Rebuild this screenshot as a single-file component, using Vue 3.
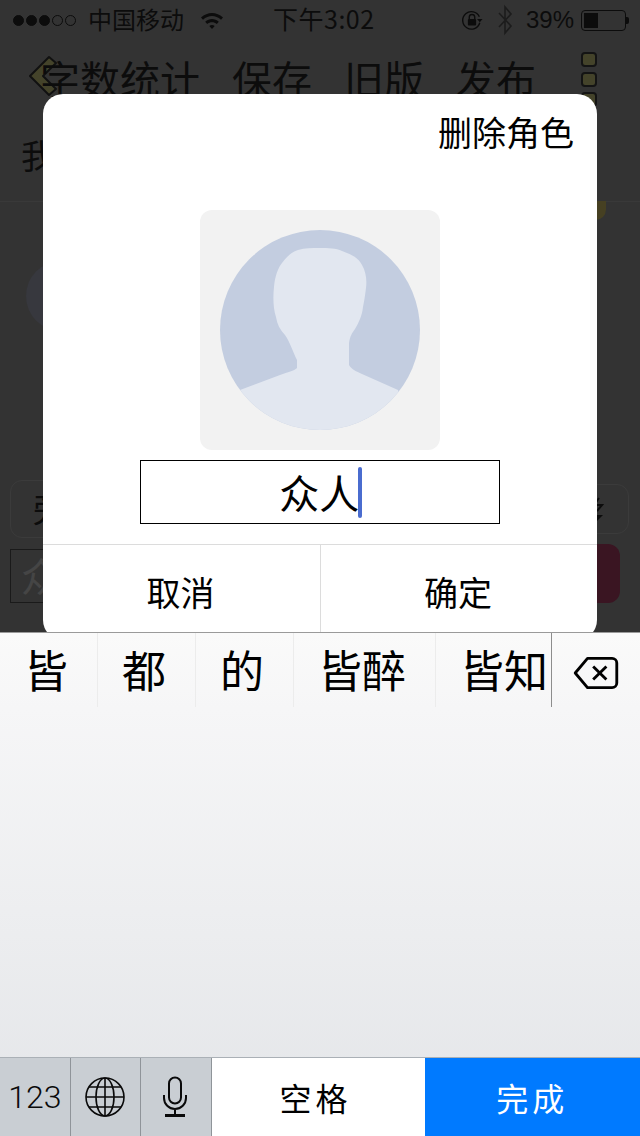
<template>
  <div class="screen">
    <div class="upper">
      <div class="status">
        <div class="signal">
          <i v-for="n in 3" :key="'on' + n" class="dot on"></i>
          <i v-for="n in 2" :key="'off' + n" class="dot"></i>
        </div>
        <span class="carrier">中国移动</span>
        <svg class="wifi" width="24" height="18" viewBox="0 0 24 18">
          <path d="M1 6.500C7.500.5 16.500.5 23 6.500l-2 2.200C15.500 3.700 8.500 3.700 3 8.700z" fill="#0c0c0c" />
          <path d="M5.200 10.800c4-3.700 9.600-3.700 13.600 0l-2 2.200c-2.900-2.500-6.700-2.500-9.600 0z" fill="#0c0c0c" />
          <path d="M9.300 15c1.600-1.400 3.800-1.400 5.400 0L12 18z" fill="#0c0c0c" />
        </svg>
        <span class="clock">下午3:02</span>
        <svg class="lock" width="22" height="22" viewBox="0 0 24 24">
          <path d="M20 8.500A9.500 9.500 0 1 0 20.500 15" fill="none" stroke="#0c0c0c" stroke-width="1.500" />
          <path d="M17.500 11h6l-3 3.500z" fill="#0c0c0c" />
          <path d="M9 11V9a3 3 0 0 1 6 0v2" fill="none" stroke="#0c0c0c" stroke-width="1.500" />
          <rect x="7.500" y="11" width="9" height="7" rx="1" fill="#0c0c0c" />
        </svg>
        <svg class="bt" width="16" height="32" viewBox="0 0 16 32">
          <path d="M2 9l12 13-6 7V3l6 7L2 23" fill="none" stroke="#1c1c1c" stroke-width="1.600" />
        </svg>
        <span class="percent">39%</span>
        <div class="battery"><div class="level" :style="{ width: batteryLevel + '%' }"></div></div>
        <i class="battery-tip"></i>
      </div>

      <div class="toolbar">
        <svg class="back" width="32" height="44" viewBox="0 0 32 44">
          <path d="M22 3L3 22l19 19 7-6-13-13L29 9z" fill="#44432a" stroke="#111" stroke-width="2" stroke-linejoin="round" />
        </svg>
        <span v-for="item in toolItems" :key="item" class="tool">{{ item }}</span>
        <div class="more">
          <i></i><i></i><i></i>
        </div>
      </div>

      <div class="title-row">
        <span>我</span>
        <i class="badge"></i>
      </div>
      <div class="profile-row"><i class="face"></i></div>
      <div class="name-row">
        <div class="name-box"><span>旁白</span></div>
        <div class="arrow-box">
          <svg width="14" height="26" viewBox="0 0 14 26">
            <path d="M9 1L4 8h8L7 14" fill="none" stroke="#0c0c0c" stroke-width="2" />
            <path d="M1 18h12L6 25z" fill="#0c0c0c" />
          </svg>
        </div>
      </div>
      <div class="send-row">
        <div class="send-input">众人</div>
        <div class="send-btn"></div>
      </div>

      <div class="dialog">
        <div class="dialog-head">删除角色</div>
        <div class="avatar-box">
          <svg width="200" height="200" viewBox="0 0 200 200">
            <defs>
              <clipPath id="avatarClip"><circle cx="100" cy="100" r="100" /></clipPath>
            </defs>
            <circle cx="100" cy="100" r="100" fill="#c3cde0" />
            <g clip-path="url(#avatarClip)">
              <path
                class="figure"
                d="M100 18C108 18 116 18 122 21C130 24 138 27 142 35C146 42 147 50 146 58C145 66 144 72 143 77C142 86 139 92 135 99C132 103 130 106 129 113V135C132 140 136 141 142 144L178 160L190 210H10L20 160L60 145C68 142 74 141 77 138V130C73 122 70 112 65 105C60 100 57 94 56 87C53 78 53 66 54 57C55 46 58 38 62 33C67 26 72 22 78 20C85 18 92 18 100 18Z"
              />
            </g>
          </svg>
        </div>
        <div class="name-input">
          <span>众人</span><i class="caret"></i>
        </div>
        <div class="dialog-actions">
          <button class="action">取消</button>
          <button class="action">确定</button>
        </div>
      </div>
    </div>

    <div class="keyboard">
      <div class="candidates">
        <span v-for="word in candidates" :key="word" class="candidate">{{ word }}</span>
        <div class="delete">
          <svg width="46" height="34" viewBox="0 0 48 36">
            <path d="M15 2.500H41a5 5 0 0 1 5 5v21a5 5 0 0 1-5 5H15L2 18z" fill="none" stroke="#000" stroke-width="3" stroke-linejoin="round" />
            <path d="M21 11l14 14M35 11L21 25" fill="none" stroke="#000" stroke-width="3" />
          </svg>
        </div>
      </div>
      <div class="keys">
        <div class="key gray num">123</div>
        <div class="key gray">
          <svg width="42" height="42" viewBox="0 0 42 42" fill="none" stroke="#0a0a0a" stroke-width="1.600">
            <circle cx="21" cy="21" r="19" />
            <ellipse cx="21" cy="21" rx="9" ry="19" />
            <path d="M21 2v38M2 21h38M5 11h32M5 31h32" />
          </svg>
        </div>
        <div class="key gray mic">
          <svg width="26" height="42" viewBox="0 0 26 42" fill="none" stroke="#0a0a0a" stroke-width="2">
            <rect x="7" y="1.500" width="12" height="26" rx="6" />
            <path d="M2 19v3a11 11 0 0 0 22 0v-3M13 33v6" />
            <path d="M3 39.500h20" stroke-width="3" />
          </svg>
        </div>
        <div class="key space">空格</div>
        <div class="key done">完成</div>
      </div>
    </div>
  </div>
</template>

<script setup>
const batteryLevel = 36
const toolItems = ['字数统计', '保存', '旧版', '发布']
const candidates = ['皆', '都', '的', '皆醉', '皆知']
</script>

<style scoped>
.screen {
  width: 640px;
  height: 1136px;
  display: flex;
  flex-direction: column;
  overflow: hidden;
  font-family: "Noto Sans CJK SC", "Noto Sans", sans-serif;
  color: #000;
}

.upper {
  position: relative;
  height: 632px;
  flex: none;
  background: #333;
  overflow: hidden;
}

.status {
  height: 40px;
  display: flex;
  align-items: center;
  padding-left: 13px;
  color: #0c0c0c;
  font-size: 24px;
}

.signal {
  display: flex;
  gap: 2px;
  width: 75px;
}

.dot {
  width: 11px;
  height: 11px;
  border-radius: 50%;
  border: 1px solid #0c0c0c;
  box-sizing: border-box;
}

.dot.on {
  background: #0c0c0c;
}

.carrier {
  width: 112px;
  line-height: 38px;
  height: 40px;
}

.wifi {
  margin-right: 49px;
}

.clock {
  width: 188px;
  font-size: 25px;
  letter-spacing: 0.5px;
  line-height: 36px;
  height: 40px;
}

.lock {
  margin-right: 14px;
}

.bt {
  margin-right: 13px;
}

.percent {
  width: 55px;
  font-family: "Liberation Sans", sans-serif;
  font-size: 24px;
}

.battery {
  width: 45px;
  height: 21px;
  box-sizing: border-box;
  border: 1px solid #0c0c0c;
  border-radius: 4px;
  padding: 2px;
}

.level {
  height: 100%;
  background: #0c0c0c;
}

.battery-tip {
  width: 3px;
  height: 7px;
  background: #0c0c0c;
  border-radius: 0 2px 2px 0;
}

.toolbar {
  position: relative;
  height: 76px;
  display: flex;
  align-items: center;
  gap: 32px;
  padding-left: 40px;
}

.back {
  position: absolute;
  left: 27px;
  top: 14px;
}

.tool {
  position: relative;
  font-size: 40px;
  line-height: 76px;
  color: #0c0c0c;
}

.more {
  position: absolute;
  left: 581px;
  top: 12px;
  display: flex;
  flex-direction: column;
  gap: 5px;
}

.more i {
  width: 16px;
  height: 15px;
  box-sizing: border-box;
  background: #44432a;
  border: 2px solid #141414;
  border-radius: 4px;
}

.title-row {
  height: 86px;
  padding-left: 21px;
  box-sizing: border-box;
  border-bottom: 1px solid #393939;
  position: relative;
  font-size: 34px;
  line-height: 78px;
  color: #0c0c0c;
}

.badge {
  position: absolute;
  left: 585px;
  bottom: -19px;
  width: 21px;
  height: 19px;
  background: #464022;
  border-radius: 0 0 12px 12px;
}

.profile-row {
  height: 277px;
  padding: 59px 0 0 26px;
  box-sizing: border-box;
}

.face {
  display: block;
  width: 70px;
  height: 70px;
  border-radius: 50%;
  background: #37383e;
}

.name-row {
  position: absolute;
  left: 10px;
  right: 11px;
  top: 480px;
  display: flex;
  justify-content: space-between;
}

.name-box {
  width: 100px;
  height: 58px;
  box-sizing: border-box;
  border: 1px solid #3b3b3b;
  border-radius: 12px;
  padding-left: 22px;
  font-size: 34px;
  line-height: 54px;
  color: #0c0c0c;
}

.arrow-box {
  width: 100px;
  height: 50px;
  margin-top: 4px;
  box-sizing: border-box;
  border: 1px solid #3b3b3b;
  border-radius: 12px;
  padding: 12px 0 0 60px;
}

.send-row {
  position: absolute;
  left: 10px;
  right: 20px;
  top: 544px;
  display: flex;
  justify-content: space-between;
}

.send-input {
  width: 100px;
  height: 54px;
  margin-top: 5px;
  box-sizing: border-box;
  border: 1px solid #1a1a1a;
  padding-left: 10px;
  font-size: 40px;
  line-height: 50px;
  color: #454545;
}

.send-btn {
  width: 100px;
  height: 59px;
  background: #3a1522;
  border-radius: 12px;
}

.dialog {
  position: absolute;
  left: 43px;
  top: 94px;
  width: 554px;
  height: 546px;
  background: #fff;
  border-radius: 20px;
  overflow: hidden;
  display: flex;
  flex-direction: column;
  align-items: center;
}

.dialog-head {
  align-self: stretch;
  height: 116px;
  padding: 16px 23px 0 0;
  box-sizing: border-box;
  text-align: right;
  font-size: 34px;
  line-height: 44px;
  flex: none;
}

.avatar-box {
  width: 240px;
  height: 240px;
  flex: none;
  display: flex;
  align-items: center;
  justify-content: center;
  background: #f2f2f2;
  border-radius: 12px;
}

.figure {
  fill: #e2e7f0;
  filter: blur(0.6px);
}

.name-input {
  width: 360px;
  height: 64px;
  flex: none;
  margin-top: 10px;
  box-sizing: border-box;
  border: 1px solid #000;
  display: flex;
  align-items: center;
  justify-content: center;
  font-size: 40px;
  padding-left: 1px;
}

.caret {
  width: 3.5px;
  height: 51px;
  background: #4a6ccf;
  border-radius: 2px;
  margin-left: -1px;
}

.dialog-actions {
  align-self: stretch;
  height: 96px;
  flex: none;
  margin-top: 20px;
  border-top: 1px solid #dcdcdc;
  display: flex;
}

.action {
  height: 96px;
  flex: none;
  width: 277px;
  padding: 0 2px 4px 0;
  background: none;
  border: 0;
  font-family: inherit;
  font-size: 34px;
  color: #000;
}

.action + .action {
  border-left: 1px solid #dcdcdc;
}

.keyboard {
  flex: 1;
  display: flex;
  flex-direction: column;
  border-top: 1px solid #9a9a9a;
  background: linear-gradient(#fafafa, #f6f6f7 15%, #e3e5e8);
}

.candidates {
  height: 74px;
  flex: none;
  display: flex;
  position: relative;
}

.candidate {
  flex: none;
  padding: 0 29px 0 24px;
  border-right: 1px solid #ececec;
  font-size: 44px;
  line-height: 72px;
  white-space: nowrap;
  overflow: hidden;
}

.candidate:last-of-type {
  width: 116px;
  box-sizing: border-box;
  padding-right: 0;
  border-right: 1px solid #8d8d8d;
}

.delete {
  flex: 1;
  display: flex;
  align-items: center;
  justify-content: center;
  padding-top: 6px;
}

.keys {
  margin-top: auto;
  height: 78px;
  flex: none;
  display: flex;
  border-top: 1px solid #aab0b6;
}

.key {
  display: flex;
  align-items: center;
  justify-content: center;
  box-sizing: border-box;
}

.gray {
  width: 70.5px;
  background: #c9ced3;
  border-right: 1px solid #8f9499;
}

.mic {
  padding-right: 2px;
}

.num {
  font-family: Roboto, sans-serif;
  font-weight: 300;
  font-size: 32px;
  color: #0a0a0a;
}

.space {
  width: 213px;
  background: #fff;
  font-size: 32px;
  letter-spacing: 4px;
  padding-right: 5px;
}

.done {
  flex: 1;
  background: #007aff;
  color: #fff;
  font-size: 32px;
  letter-spacing: 4px;
}
</style>
